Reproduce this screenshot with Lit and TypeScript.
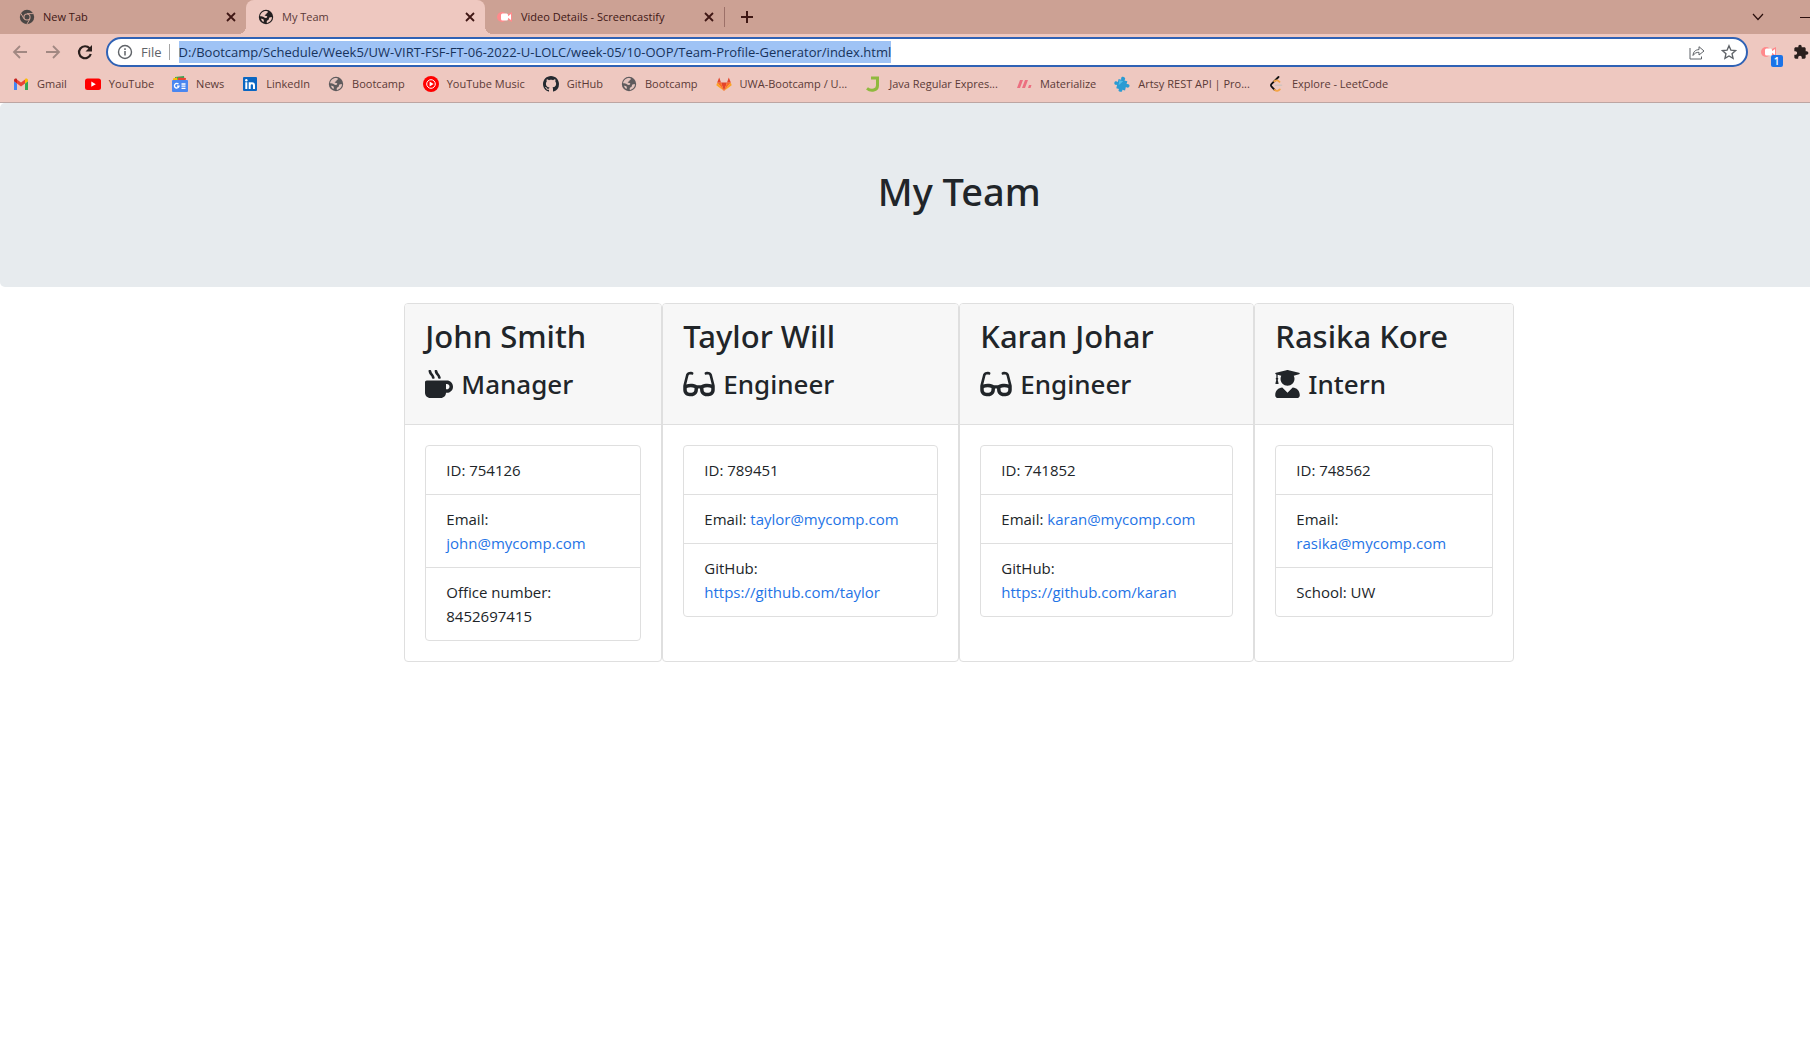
import { LitElement, html, svg, css, nothing, type TemplateResult } from "lit";
import { customElement, property } from "lit/decorators.js";

const icon = (viewBox: string, cls: string, body: unknown) =>
  html`<svg class=${cls} viewBox=${viewBox} aria-hidden="true">${body}</svg>`;

const globe = (fg: string, bg: string) => svg`
  <circle cx="8" cy="8" r="7.2" fill=${fg}/>
  <path fill=${bg} d="M6.2 2.2C7.6 1.8 9.6 2 10 2.8c.3.8-1.4 1-1.5 1.9-.1.8-1.3.7-1.7 1.3-.3.6.6.9 1.500.9 1.300.1 1.200 1.300.300 1.900-.9.600-2.100.1-2.700-.500C5 7.400 3.600 7.500 2 7.300 2.200 4.900 3.900 2.900 6.200 2.200zM14 8c.1 2.700-2 5.300-4.700 5.900-.9.1-.6-1.300-.4-2 .3-.8 1.400-.6 1.800-1.400.3-.7.1-1.600.8-2C12.300 8.100 13.300 8.600 14 8zM3 9.700c1 0 2.300.2 2.700 1 .3.700.1 1.700-.2 2.300C4.200 12.300 3.400 11.200 3 9.700z"/>`;

const castify = svg`
  <circle cx="5" cy="8" r="5" fill="#ff8a8c"/>
  <path fill="#ff8a8c" d="M9 6l6-3v10l-6-3z"/>
  <rect x="4" y="4.500" width="7" height="7" rx="1.500" fill="#fff"/>
  <path fill="#fff" d="M10 8l4-3v6z"/>`;

const marks: Record<string, TemplateResult | ReturnType<typeof svg>> = {
  chrome: svg`
    <circle cx="8" cy="8" r="7.2" fill="#4b4644"/>
    <path d="M8 4.600h6.500M5 9.800L1.800 4.300M11 9.800l-3.200 5.500" stroke="#cca194" stroke-width="1"/>
    <circle cx="8" cy="8" r="3.600" fill="#cca194"/>
    <circle cx="8" cy="8" r="2.500" fill="#4b4644"/>`,
  globeDark: globe("#231f20", "#eec8c0"),
  globe: globe("#5f5b5d", "#e3c3bd"),
  castify,
  gmail: svg`
    <path fill="#4285f4" d="M1 14h3V7.500L1 5z"/>
    <path fill="#34a853" d="M12 14h3V5l-3 2.500z"/>
    <path fill="#ea4335" d="M4 3.500l4 3 4-3v4l-4 3-4-3z"/>
    <path fill="#c5221f" d="M1 4.300C1 2.600 2.900 2 4 3v4.500L1 5.200z"/>
    <path fill="#fbbc04" d="M15 4.300C15 2.600 13.100 2 12 3v4.500l3-2.300z"/>`,
  youtube: svg`<rect x="0" y="2.500" width="16" height="11.500" rx="2.500" fill="#f00"/><path fill="#fff" d="M6.300 5.600l4.500 2.600-4.500 2.600z"/>`,
  news: svg`
    <path fill="#34a853" d="M3 1l9-1 .5 5H3z"/>
    <path fill="#ea4335" d="M6 1.500l8 .5-.5 4H6z"/>
    <path fill="#fbbc04" d="M1 2.500l4-1 1 4H1z"/>
    <rect x="0" y="4" width="16" height="12" rx="1" fill="#4a86f0"/>
    <path d="M6.500 8.200A2.300 2.300 0 1 0 7 10.200H5M9.500 8h4M9.500 10.200h4M9.500 12.400h4" stroke="#fff" stroke-width="1.300" fill="none"/>`,
  linkedin: svg`
    <rect x="1" y="1" width="14" height="14" rx="1" fill="#0a66c2"/>
    <circle cx="4.300" cy="4.300" r="1.200" fill="#fff"/>
    <path d="M4.300 6.300V13M7.700 6.300V13M7.700 9.500c0-3 4.300-3 4.300 0V13" stroke="#fff" stroke-width="2" fill="none"/>`,
  music: svg`
    <circle cx="8" cy="8" r="8" fill="#f00"/>
    <circle cx="8" cy="8" r="4.300" fill="none" stroke="#fff" stroke-width="1"/>
    <path fill="#fff" d="M6.600 5.600L10.600 8l-4 2.400z"/>`,
  github: svg`<path fill="#24292f" d="M8 0C3.580 0 0 3.580 0 8c0 3.540 2.290 6.530 5.470 7.590.4.070.55-.17.55-.38 0-.19-.01-.82-.01-1.490-2.010.37-2.530-.49-2.690-.94-.09-.23-.48-.94-.82-1.130-.28-.15-.68-.52-.01-.53.63-.01 1.080.58 1.230.82.72 1.210 1.870.87 2.330.66.070-.52.28-.87.51-1.070-1.780-.2-3.640-.89-3.640-3.950 0-.87.31-1.590.82-2.150-.08-.2-.36-1.020.08-2.120 0 0 .67-.21 2.200.82.64-.18 1.320-.27 2-.27s1.360.09 2 .27c1.530-1.040 2.200-.82 2.200-.82.44 1.100.16 1.920.08 2.120.51.56.82 1.270.82 2.150 0 3.070-1.870 3.750-3.650 3.950.29.25.54.73.54 1.480 0 1.070-.01 1.930-.01 2.200 0 .21.15.46.55.38A8.010 8.010 0 0 0 16 8c0-4.420-3.580-8-8-8z"/>`,
  gitlab: svg`
    <path fill="#e24329" d="M8 15L5 6.500h6z"/>
    <path fill="#fc6d26" d="M8 15L5 6.500H1.200zM8 15l3-8.500h3.800z"/>
    <path fill="#fca326" d="M1.200 6.500L.3 9.300 8 15zM14.800 6.500l.9 2.800L8 15z"/>
    <path fill="#e24329" d="M1.200 6.500H5L3.200 1.500zM14.800 6.500H11l1.800-5z"/>`,
  javaRegex: svg`<path d="M6 2h6.500v7.500c0 5-6.500 6-10.500 2.800" stroke="#8fb93e" stroke-width="3" fill="none"/>`,
  materialize: svg`<path fill="#ec6f80" d="M4 4h3L4 12H1zM9 4h3l-3 8H6zM13 9h2.500l-1 3H12z"/>`,
  artsy: svg`<g transform="rotate(14 8 8)"><path fill="#2a9bd3" d="M3.500 4h2.700C5.200 2 6 .8 7.800.8S10.300 2 9.500 4h3v3c2-.9 3.300 0 3.300 1.500S14.500 11 12.500 10v3.500H9.600c.8 1.500 0 2.400-1.600 2.400s-2.500-.9-1.600-2.400H3.500V10C1.500 11 .3 10 .3 8.500S1.500 6.200 3.500 7z"/><path fill="#53bde6" d="M4.500 5h4L5 10z"/></g>`,
  leetcode: svg`
    <path d="M10.500 1L3.600 7.800c-.9.9-.9 2 0 2.900l3 3.200" stroke="#111" stroke-width="1.800" fill="none" stroke-linecap="round"/>
    <path d="M6.300 5.300c2-1.600 3.600-1.200 5.200.5M6.600 13.900c1.800 1.600 3.600 1.300 5.200-.5" stroke="#f5a545" stroke-width="1.800" fill="none" stroke-linecap="round"/>
    <path d="M7.500 9.300h6" stroke="#d0c4be" stroke-width="1.600" stroke-linecap="round"/>`,
};

const roleIcons: Record<string, { box: string; path: string; width: string }> = {
  Manager: {
    box: "0 0 512 512", width: "mug",
    path: "M127.1 146.5c1.300 7.700 8 13.500 16 13.500h16.500c9.800 0 17.600-8.500 16.300-18-3.800-28.200-16.400-54.200-36.600-74.700-14.400-14.700-23.600-33.300-26.400-53.500C111.800 5.900 105 0 96.800 0H80.400C70.600 0 63 8.500 64.100 18c3.900 31.900 18 61.300 40.600 84.400 12 12.200 19.700 27.500 22.400 44.100zm112 0c1.300 7.700 8 13.500 16 13.500h16.500c9.800 0 17.600-8.500 16.300-18-3.800-28.200-16.400-54.200-36.600-74.700-14.400-14.700-23.600-33.300-26.400-53.500C223.800 5.900 217 0 208.800 0h-16.400c-9.800 0-17.500 8.500-16.300 18 3.900 31.900 18 61.300 40.600 84.400 12 12.200 19.700 27.500 22.400 44.100zM400 192H32c-17.700 0-32 14.300-32 32v192c0 53 43 96 96 96h192c53 0 96-43 96-96h16c61.800 0 112-50.200 112-112s-50.200-112-112-112zm0 160h-16v-96h16c26.500 0 48 21.500 48 48s-21.500 48-48 48z",
  },
  Engineer: {
    box: "0 0 576 512", width: "glasses",
    path: "M574.1 280.37L528.75 98.66c-5.91-23.7-21.59-44.05-43-55.81-21.44-11.73-46.97-14.11-70.19-6.33l-15.25 5.08c-8.39 2.79-12.92 11.86-10.12 20.24l5.06 15.18c2.79 8.38 11.85 12.91 20.23 10.12l13.18-4.39c10.87-3.62 23-3.57 33.16 1.73 10.29 5.37 17.57 14.56 20.37 25.82l38.46 153.82c-22.19-6.81-49.79-12.46-81.2-12.46-34.77 0-73.98 7.02-114.85 26.74h-73.18c-40.87-19.74-80.08-26.75-114.86-26.75-31.42 0-59.02 5.65-81.21 12.46l38.46-153.83c2.79-11.25 10.09-20.45 20.38-25.81 10.16-5.3 22.28-5.35 33.15-1.73l13.17 4.39c8.38 2.79 17.44-1.74 20.23-10.12l5.06-15.18c2.8-8.38-1.73-17.45-10.12-20.24l-15.25-5.08c-23.22-7.78-48.75-5.41-70.19 6.33-21.41 11.77-37.09 32.11-43 55.8L1.9 280.37A64.218 64.218 0 0 0 0 295.86v70.25C0 429.01 51.58 480 115.2 480h37.12c60.28 0 110.37-45.94 114.88-105.37l2.93-38.63h35.75l2.93 38.63C313.31 434.06 363.4 480 423.68 480h37.12c63.62 0 115.2-50.99 115.2-113.88v-70.25c0-5.23-.64-10.43-1.9-15.5zm-370.72 89.42c-1.97 25.91-24.4 46.21-51.06 46.21H115.2C86.97 416 64 393.62 64 366.11v-37.54c18.12-6.49 43.42-12.92 72.58-12.92 23.86 0 47.26 4.33 69.93 12.92l-3.13 41.22zM512 366.12c0 27.51-22.97 49.88-51.2 49.88h-37.12c-26.67 0-49.1-20.3-51.06-46.21l-3.13-41.22c22.67-8.59 46.08-12.92 69.95-12.92 29.17 0 54.47 6.43 72.56 12.91v37.55z",
  },
  Intern: {
    box: "0 0 448 512", width: "graduate",
    path: "M319.4 320.6L224 416l-95.4-95.4C57.1 323.7 0 382.2 0 454.4v9.6c0 26.5 21.5 48 48 48h352c26.5 0 48-21.5 48-48v-9.6c0-72.2-57.1-130.7-128.6-133.8zM13.6 79.8l6.4 1.5v58.4c-7 4.2-12 11.5-12 20.3 0 8.4 4.6 15.4 11.1 19.7L3.5 242c-1.700 6.900 2.100 14 7.600 14h41.8c5.500 0 9.300-7.100 7.600-14l-15.600-62.300C51.400 175.400 56 168.400 56 160c0-8.800-5-16.100-12-20.300V87.100l66 15.900c-8.600 17.200-14 36.400-14 57 0 70.700 57.300 128 128 128s128-57.300 128-128c0-20.600-5.300-39.800-14-57l96.300-23.200c18.200-4.400 18.200-27.100 0-31.500l-190.400-46c-13-3.100-26.700-3.100-39.700 0L13.600 48.200c-18.100 4.400-18.100 27.200 0 31.600z",
  },
};

const bookmarks: [string, string][] = [
  ["gmail", "Gmail"],
  ["youtube", "YouTube"],
  ["news", "News"],
  ["linkedin", "LinkedIn"],
  ["globe", "Bootcamp"],
  ["music", "YouTube Music"],
  ["github", "GitHub"],
  ["globe", "Bootcamp"],
  ["gitlab", "UWA-Bootcamp / U..."],
  ["javaRegex", "Java Regular Expres..."],
  ["materialize", "Materialize"],
  ["artsy", "Artsy REST API | Pro..."],
  ["leetcode", "Explore - LeetCode"],
];

interface Detail { label: string; value: string; href?: string }
interface Member { name: string; role: string; details: Detail[] }

const mail = (address: string): Detail => ({ label: "Email", value: address, href: `mailto:${address}` });
const repo = (url: string): Detail => ({ label: "GitHub", value: url, href: url });

const team: Member[] = [
  { name: "John Smith", role: "Manager", details: [{ label: "ID", value: "754126" }, mail("john@mycomp.com"), { label: "Office number", value: "8452697415" }] },
  { name: "Taylor Will", role: "Engineer", details: [{ label: "ID", value: "789451" }, mail("taylor@mycomp.com"), repo("https://github.com/taylor")] },
  { name: "Karan Johar", role: "Engineer", details: [{ label: "ID", value: "741852" }, mail("karan@mycomp.com"), repo("https://github.com/karan")] },
  { name: "Rasika Kore", role: "Intern", details: [{ label: "ID", value: "748562" }, mail("rasika@mycomp.com"), { label: "School", value: "UW" }] },
];

@customElement("browser-chrome")
export class BrowserChrome extends LitElement {
  static styles = css`
    :host { display: block; background: #eec8c0; border-bottom: 1px solid #bda5a2; color: #5b3a37; font-family: "Open Sans", "Noto Sans", sans-serif; font-size: 11px; }
    * { box-sizing: border-box; }
    button { border: 0; padding: 0; background: none; color: inherit; font: inherit; display: grid; place-items: center; }
    svg { display: block; flex: none; }
    .i16 { width: 16px; height: 16px; }
    .i14 { width: 14px; height: 14px; }
    .i20 { width: 20px; height: 20px; }
    .line { fill: none; stroke: currentColor; }

    .tabs { display: flex; height: 34px; padding-left: 7px; background: #cca194; color: #3f1714; }
    .tab { position: relative; width: 239px; display: flex; align-items: center; gap: 8px; padding: 0 8px 0 12px; }
    .tab .title { flex: 1; }
    .tab.active { background: #eec8c0; border-radius: 8px 8px 0 0; color: #5b3a37; }
    .tab.active::before, .tab.active::after { content: ""; position: absolute; bottom: 0; width: 8px; height: 8px; }
    .tab.active::before { left: -8px; background: radial-gradient(circle at 0 0, #cca194 8px, #eec8c0 8px); }
    .tab.active::after { right: -8px; background: radial-gradient(circle at 100% 0, #cca194 8px, #eec8c0 8px); }
    .close { width: 14px; height: 14px; color: #3f1714; }
    .divider { width: 1px; height: 20px; margin: 7px 0; background: #9c7068; }
    .plus { width: 44px; height: 34px; }
    .window { margin-left: auto; display: flex; align-items: center; gap: 35px; padding-right: 105px; color: #2a0f0d; }

    .toolbar { display: flex; align-items: center; height: 36px; padding-left: 11px; }
    .nav { display: flex; gap: 12px; width: 95px; color: #a18882; }
    .nav .reload { color: #2a1f1d; }
    .omnibox { flex: 1; height: 30px; display: flex; align-items: center; border: 2px solid #2f62b5; border-radius: 15px; background: #fff; padding: 0 9px; color: #5f6368; font-size: 13px; }
    .scheme { padding: 0 7px 0 8px; }
    .bar { width: 1px; height: 16px; margin-right: 9px; background: #a5a5a5; }
    .url { field-sizing: content; border: 0; padding: 0; height: 22px; background: #9fc3f5; color: #17335c; font: inherit; outline: 0; }
    .actions { margin-left: auto; display: flex; gap: 16px; }
    .extensions { display: flex; align-items: center; gap: 16px; width: 171px; padding-left: 13px; color: #2a1f1d; }
    .ext { position: relative; }
    .badge { position: absolute; left: 10px; top: 11px; width: 12px; height: 12px; border-radius: 2px; background: #1a73e8; color: #fff; font-size: 10px; line-height: 12px; font-weight: 600; text-align: center; }

    .bookmarks { display: flex; gap: 18px; height: 32px; padding: 2px 13px 0; align-items: flex-start; }
    .bookmark { display: flex; align-items: center; gap: 8px; height: 24px; color: inherit; text-decoration: none; white-space: nowrap; }
  `;

  private tab(mark: string, title: string, active = false) {
    return html`<div class="tab ${active ? "active" : ""}">
      ${icon("0 0 16 16", "i16", marks[mark])}
      <span class="title">${title}</span>
      <button class="close" aria-label="Close tab">${icon("0 0 14 14", "i14 line", svg`<path d="M3 3l8 8M11 3l-8 8" stroke-width="1.800"/>`)}</button>
    </div>`;
  }

  render() {
    return html`
      <div class="tabs">
        ${this.tab("chrome", "New Tab")}
        ${this.tab("globeDark", "My Team", true)}
        ${this.tab("castify", "Video Details - Screencastify")}
        <span class="divider"></span>
        <button class="plus" aria-label="New tab">${icon("0 0 14 14", "i14 line", svg`<path d="M7 1v12M1 7h12" stroke-width="2"/>`)}</button>
        <div class="window">
          <button aria-label="Search tabs">${icon("0 0 14 14", "i14 line", svg`<path d="M2 4l5 5.500L12 4" stroke-width="1.200"/>`)}</button>
          <button aria-label="Minimize">${icon("0 0 14 14", "i14 line", svg`<path d="M0 7.500h11" stroke-width="1"/>`)}</button>
        </div>
      </div>
      <div class="toolbar">
        <div class="nav">
          <button aria-label="Back">${icon("0 0 20 20", "i20 line", svg`<path d="M16 10H3M9 4l-6 6 6 6" stroke-width="1.800"/>`)}</button>
          <button aria-label="Forward">${icon("0 0 20 20", "i20 line", svg`<path d="M3 10h13M10 4l6 6-6 6" stroke-width="1.800"/>`)}</button>
          <button class="reload" aria-label="Reload">${icon("0 0 20 20", "i20", svg`<path d="M14.600 6.300A6 6 0 1 0 15.800 12" fill="none" stroke="currentColor" stroke-width="2.200"/><path d="M17 3v6.500h-6.500z" fill="currentColor"/>`)}</button>
        </div>
        <div class="omnibox">
          ${icon("0 0 16 16", "i16 line", svg`<circle cx="8" cy="8" r="6.500" stroke-width="1.400"/><path d="M8 7v4.500M8 4.300v1.600" stroke-width="1.500"/>`)}
          <label class="scheme" for="url">File</label>
          <span class="bar"></span>
          <input id="url" class="url" value="D:/Bootcamp/Schedule/Week5/UW-VIRT-FSF-FT-06-2022-U-LOLC/week-05/10-OOP/Team-Profile-Generator/index.html" />
          <div class="actions">
            <button aria-label="Share">${icon("0 0 16 16", "i16 line", svg`<path d="M1 4v11h11.500v-2.500M4 11.500C4.300 7.500 6.500 5.800 10 5.600V2.700l5 4.300-5 4V8.300C7.500 8.300 5.700 9 4 11.500z" stroke-width="1"/>`)}</button>
            <button aria-label="Bookmark this page">${icon("0 0 18 18", "i16 line", svg`<path d="M9 2l2.100 4.900 5.300.5-4 3.500 1.200 5.200L9 13.400l-4.600 2.700 1.200-5.200-4-3.500 5.300-.5z" stroke-width="1.500"/>`)}</button>
          </div>
        </div>
        <div class="extensions">
          <button class="ext" aria-label="Screencastify">${icon("0 0 16 16", "i16", marks.castify)}<span class="badge">1</span></button>
          <button aria-label="Extensions">${icon("0 0 24 24", "i16", svg`<path fill="currentColor" d="M20.500 11H19V7c0-1.100-.9-2-2-2h-4V3.500C13 2.120 11.880 1 10.500 1S8 2.120 8 3.500V5H4c-1.100 0-1.990.9-1.990 2v3.800H3.500c1.490 0 2.700 1.210 2.700 2.700s-1.210 2.700-2.700 2.700H2V20c0 1.100.9 2 2 2h3.800v-1.500c0-1.490 1.210-2.700 2.700-2.700 1.490 0 2.700 1.210 2.700 2.700V22H17c1.100 0 2-.9 2-2v-4h1.500c1.380 0 2.500-1.120 2.500-2.500S21.880 11 20.500 11z"/>`)}</button>
        </div>
      </div>
      <nav class="bookmarks" aria-label="Bookmarks">
        ${bookmarks.map(([mark, label]) => html`<a class="bookmark" href="#">${icon("0 0 16 16", "i16", marks[mark])}<span>${label}</span></a>`)}
      </nav>`;
  }
}

@customElement("member-card")
export class MemberCard extends LitElement {
  @property({ attribute: false }) member!: Member;

  static styles = css`
    :host { display: block; border: 1px solid #dfdfdf; border-radius: 4px; background: #fff; overflow: hidden; }
    .header { padding: 12px 20px; background: #f7f7f7; border-bottom: 1px solid #dfdfdf; }
    h2, h3 { margin: 0 0 8px; line-height: 40px; font-family: "Noto Sans", "Open Sans", sans-serif; font-weight: 500; }
    h2 { font-size: 31px; }
    h3 { display: flex; align-items: center; gap: 8px; font-size: 26px; }
    svg { height: 28px; fill: currentColor; }
    .mug { width: 28px; }
    .glasses { width: 32px; }
    .graduate { width: 25px; }
    .body { padding: 20px; }
    ul { margin: 0; padding: 0; list-style: none; border: 1px solid #dfdfdf; border-radius: 4px; }
    li { padding: 12px 20px; }
    li + li { border-top: 1px solid #dfdfdf; }
    a { color: #1f74e6; text-decoration: none; }
  `;

  render() {
    const { name, role, details } = this.member;
    const art = roleIcons[role];
    return html`
      <div class="header">
        <h2>${name}</h2>
        <h3>${icon(art.box, art.width, svg`<path d=${art.path}/>`)}<span>${role}</span></h3>
      </div>
      <div class="body">
        <ul>
          ${details.map((d) => html`<li>${d.label}: ${d.href ? html`<a href=${d.href}>${d.value}</a>` : d.value ?? nothing}</li>`)}
        </ul>
      </div>`;
  }
}

@customElement("app-root")
export class AppRoot extends LitElement {
  static styles = css`
    :host { display: block; min-height: 100vh; overflow: hidden; background: #fff; color: #212529; font-family: "Open Sans", "Noto Sans", sans-serif; font-size: 15px; line-height: 24px; }
    /* The window runs past the right edge of the viewport. */
    .window { width: 106%; }
    .banner { padding: 64px 32px; margin-bottom: 16px; border-radius: 5px; background: #e7ebee; text-align: center; }
    h1 { margin: 0 0 8px; font-family: "Noto Sans", "Open Sans", sans-serif; font-size: 38px; line-height: 48px; font-weight: 500; }
    .team { display: grid; grid-template-columns: 258fr 297fr 295fr 260fr; max-width: 1110px; margin: 0 auto; }
  `;

  render() {
    return html`
      <div class="window">
        <browser-chrome></browser-chrome>
        <header class="banner"><h1>My Team</h1></header>
        <main class="team">${team.map((m) => html`<member-card .member=${m}></member-card>`)}</main>
      </div>`;
  }
}
